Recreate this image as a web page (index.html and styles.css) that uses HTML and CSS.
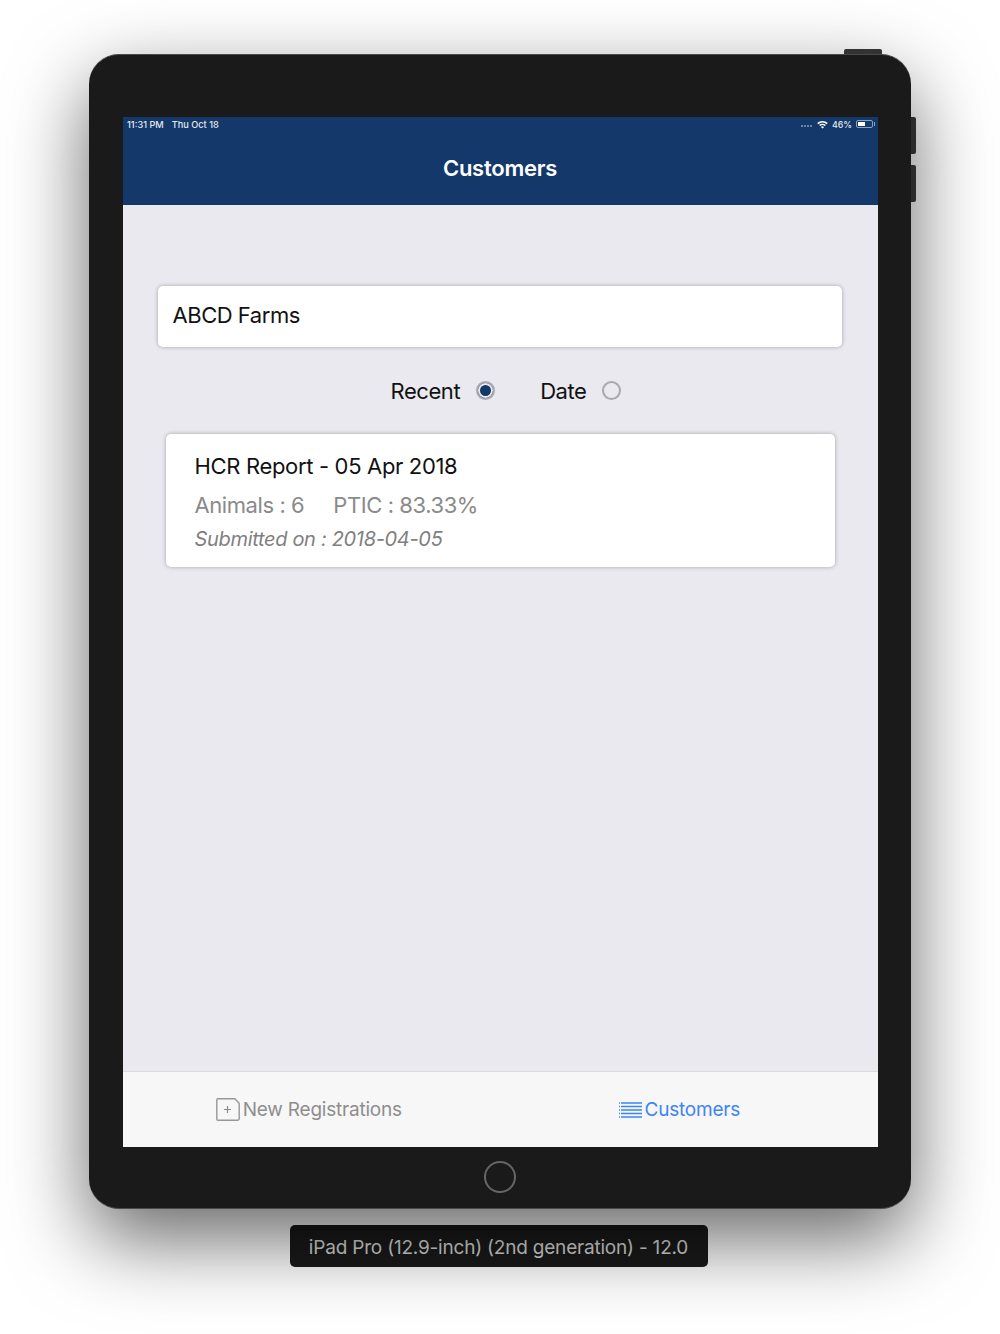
FILE: index.html
```html
<!DOCTYPE html>
<html lang="en">
<head>
<meta charset="utf-8">
<title>Customers</title>
<link rel="stylesheet" href="styles.css">
</head>
<body>
<div class="stage">
  <div class="device">
    <span class="btn-top"></span>
    <span class="btn-side btn-up"></span>
    <span class="btn-side btn-down"></span>
    <div class="screen">
      <header class="nav">
        <div class="status">
          <div class="status-left"><span>11:31 PM</span><span>Thu Oct 18</span></div>
          <div class="status-right">
            <span class="signal"><i></i><i></i><i></i><i></i></span>
            <svg class="wifi" width="11" height="9" viewBox="0 0 11 9"><path d="M5.5 8.6 3.9 6.9a2.3 2.3 0 0 1 3.2 0zM3.1 6.1 2.1 5a4.9 4.9 0 0 1 6.8 0L7.9 6.1a3.5 3.5 0 0 0-4.8 0zM1.3 4.2.2 3.1a7.6 7.6 0 0 1 10.6 0L9.7 4.2a6.1 6.1 0 0 0-8.4 0z" fill="#fff"/></svg>
            <span>46%</span>
            <span class="battery"><b></b></span>
          </div>
        </div>
        <h1 class="title">Customers</h1>
      </header>
      <main class="content">
        <div class="search">ABCD Farms</div>
        <div class="filters">
          <span class="filter-label">Recent</span>
          <span class="radio radio-on"></span>
          <span class="filter-label filter-gap">Date</span>
          <span class="radio"></span>
        </div>
        <article class="card">
          <div class="card-title">HCR Report - 05 Apr 2018</div>
          <div class="card-stats"><span>Animals : 6</span><span>PTIC : 83.33%</span></div>
          <div class="card-date">Submitted on : 2018-04-05</div>
        </article>
      </main>
      <nav class="tabs">
        <div class="tab tab-new">
          <svg width="24" height="23" viewBox="0 0 24 23"><path d="M2 .8h16.8l4.4 4.4V20.400a1.800 1.800 0 0 1-1.800 1.800H2A1.300 1.300 0 0 1 .8 20.900V2A1.300 1.300 0 0 1 2 .8z" fill="none" stroke="#979797" stroke-width="1.400"/><path d="M11.500 8v7M8 11.500h7" stroke="#8a8a8a" stroke-width="1.200"/></svg>
          <span>New Registrations</span>
        </div>
        <div class="tab tab-active">
          <svg width="23" height="16" viewBox="0 0 23 16"><path d="M2 1h21M2 4.500h21M2 8h21M2 11.500h21M2 15h21" stroke="#3d85f6" stroke-width="1.300"/><path d="M0 1h1M0 4.500h1M0 8h1M0 11.500h1M0 15h1" stroke="#3d85f6" stroke-width="1.300"/></svg>
          <span>Customers</span>
        </div>
      </nav>
    </div>
    <span class="home"></span>
  </div>
  <div class="device-label">iPad Pro (12.9-inch) (2nd generation) - 12.0</div>
</div>
</body>
</html>
```
FILE: styles.css
```css
* { box-sizing: border-box; }
html, body { margin: 0; height: 100%; background: #fff; overflow: hidden; }
body { font-family: Inter, "Liberation Sans", sans-serif; }
.stage { width: 1000px; height: 1334px; padding-top: 54px; display: flex; flex-direction: column; align-items: center; }
.device {
  position: relative; width: 822px; height: 1155px; padding: 62px 33px 62px 34px;
  background: #1a1a1a; border-radius: 30px; border: solid #4a4a4a; border-width: 1px 0;
  box-shadow: 0 30px 80px rgba(0,0,0,.6);
}
.btn-top { position: absolute; top: -6px; right: 29px; width: 38px; height: 5px; background: #333; border-radius: 2px 2px 0 0; }
.btn-side { position: absolute; right: -5px; width: 5px; height: 37px; background: #2b2b2b; border-radius: 0 2px 2px 0; }
.btn-up { top: 62px; }
.btn-down { top: 110px; }
.screen { height: 1030px; display: flex; flex-direction: column; }
.nav { height: 88px; flex: none; background: #14386a; color: #fff; padding: 0 5px 0 4px; }
.status { display: flex; justify-content: space-between; align-items: center; height: 14px; font-size: 9.2px; font-weight: 500; color: #e4e8ee; }
.status-left { display: flex; gap: 8px; }
.status-right { display: flex; align-items: center; gap: 4px; font-size: 8.8px; }
.signal { display: flex; gap: 1px; margin-right: 1px; margin-top: 4px; }
.signal i { width: 2px; height: 1.5px; background: #6d83a3; }
.battery { position: relative; width: 17px; height: 8px; border: 1px solid #8fa1ba; border-radius: 2px; padding: 1px; display: block; }
.battery::after { content: ""; position: absolute; right: -3px; top: 1px; width: 1px; height: 4px; background: #8fa1ba; }
.battery b { display: block; width: 7px; height: 100%; background: #fff; }
.title { margin: 0; padding-top: 24px; text-align: center; font-size: 22px; line-height: 27px; font-weight: 600; letter-spacing: -.25px; }
.content { flex: 1; background: #e9e9ef; padding: 81px 36px 0 35px; display: flex; flex-direction: column; }
.search { height: 61px; background: #fff; border-radius: 5px; padding-left: 14.5px; font-size: 22px; line-height: 59px; color: #111; letter-spacing: -.47px; box-shadow: 0 0 4px rgba(0,0,0,.3); }
.filters { height: 87px; padding-left: 12px; display: flex; align-items: center; justify-content: center; font-size: 22px; color: #111; letter-spacing: -.45px; }
.filter-label { margin-right: 16px; }
.filter-gap { margin-left: 45px; }
.radio { width: 19px; height: 19px; border-radius: 50%; border: 2px solid #a9a9ad; background: transparent; }
.radio-on { background: #14386a; box-shadow: inset 0 0 0 2px #e9e9ef; }
.card { margin: 0 7px 0 8px; height: 133px; background: #fff; border-radius: 5px; padding: 18px 28.5px 0; box-shadow: 0 0 4px rgba(0,0,0,.3); }
.card-title { font-size: 22px; line-height: 28px; color: #111; letter-spacing: -.33px; }
.card-stats { margin-top: 11px; font-size: 22px; line-height: 28px; color: #8a8a8a; letter-spacing: -.42px; display: flex; gap: 29px; }
.card-date { margin-top: 7px; font-size: 20px; line-height: 26px; font-style: italic; color: #7f7f7f; letter-spacing: -.32px; }
.tabs { height: 76px; flex: none; background: #f7f7f7; border-top: 1px solid #dcdcdc; display: grid; grid-template-columns: 1fr 1fr; }
.tab { display: flex; align-items: center; justify-content: center; gap: 3px; font-size: 19px; color: #8e8e8e; letter-spacing: -.22px; }
.tab-new { padding-right: 6px; }
.tab-active { color: #3d85f6; padding-right: 20px; }
.home { position: absolute; left: 395px; bottom: 15px; width: 32px; height: 32px; border-radius: 50%; border: 2px solid #666; }
.device-label { margin-top: 16px; width: 418px; height: 42px; padding-top: 2px; background: #1a1a1a; border-radius: 5px; color: #dcdcdc; font-size: 19px; line-height: 42px; text-align: center; letter-spacing: -.2px; margin-left: -3px; }
```
